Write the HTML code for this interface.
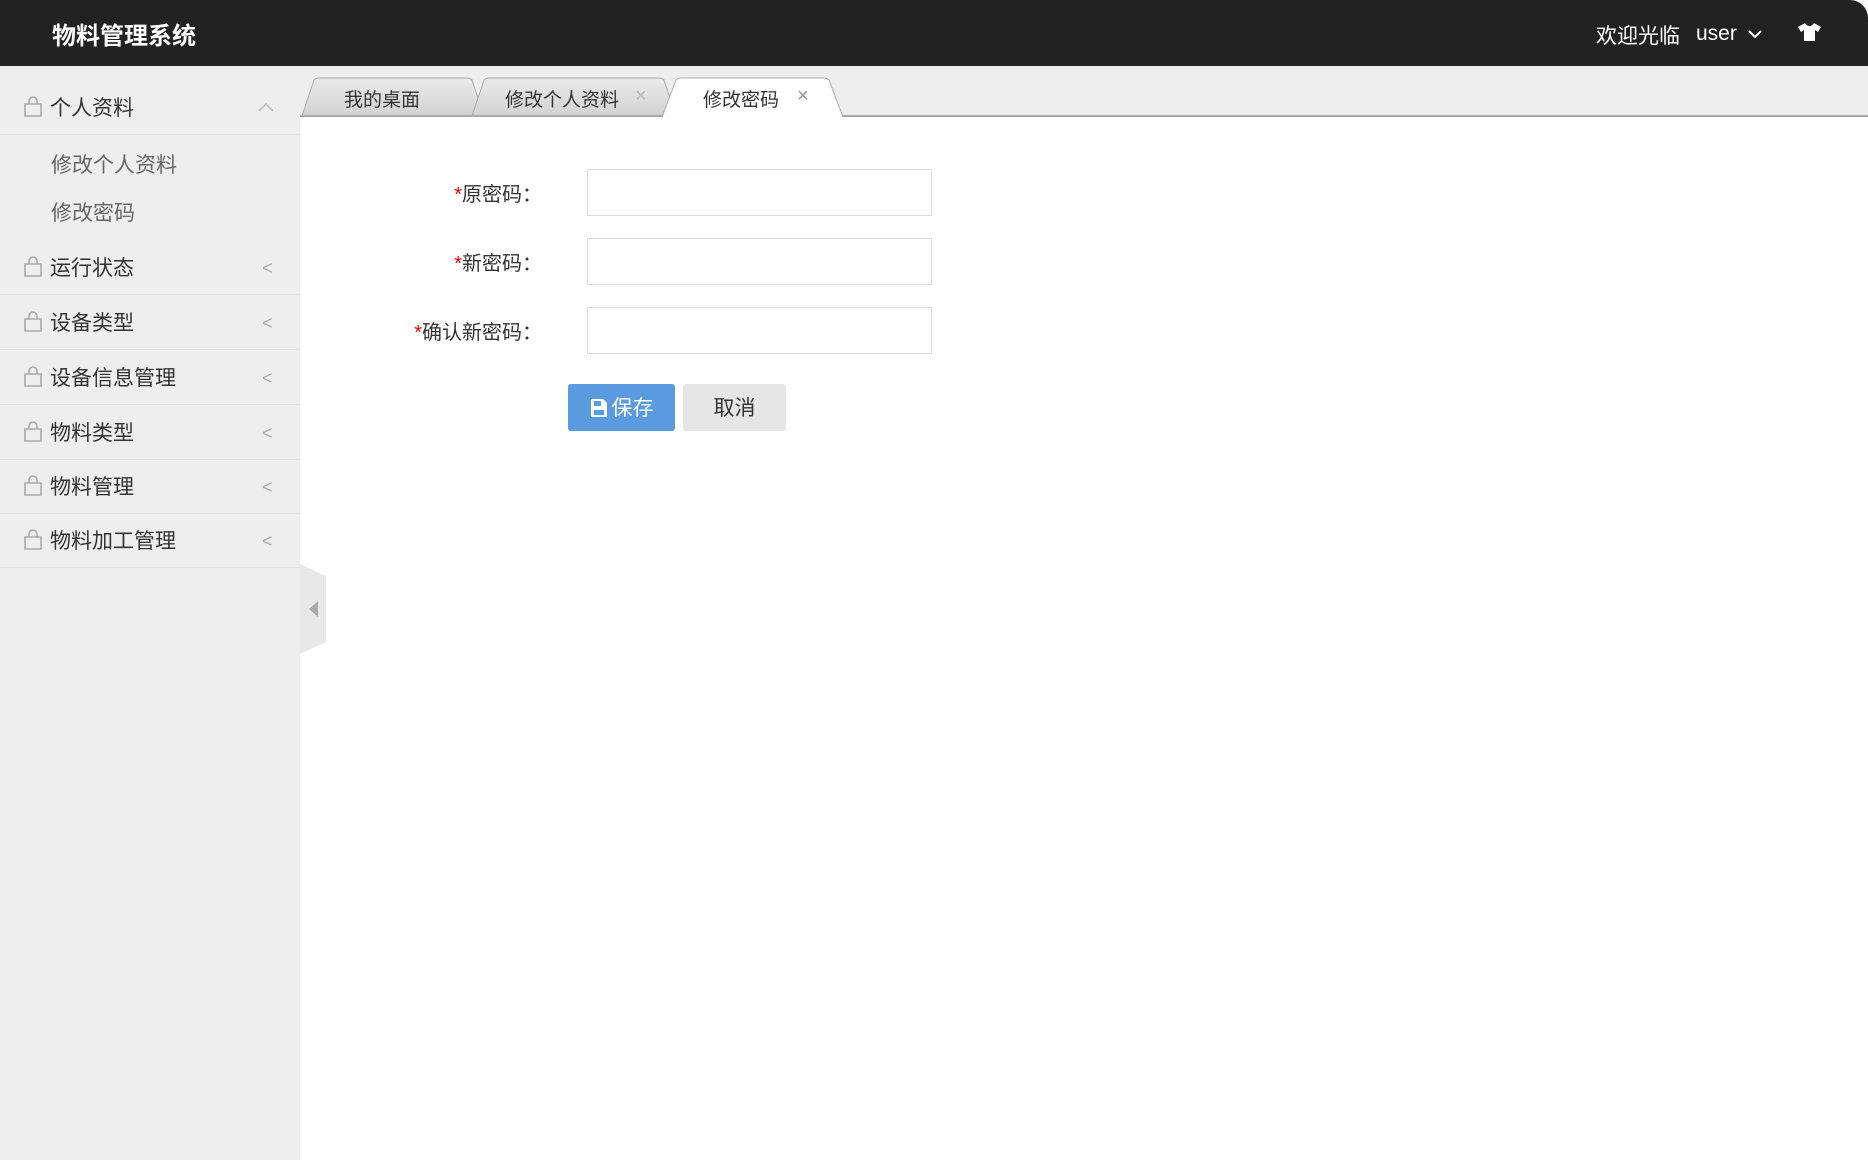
<!DOCTYPE html>
<html><head><meta charset="utf-8"><style>
*{margin:0;padding:0;box-sizing:border-box}
body{width:1868px;height:1160px;overflow:hidden;background:#fff;font-family:"Liberation Sans","Noto Sans CJK SC",sans-serif;position:relative}
.hd{position:absolute;left:0;top:0;width:1868px;height:66px;background:#222;border-top-right-radius:18px}
.title{position:absolute;left:52px;top:16px;color:#fff;font-size:24px;font-weight:bold}
.wel{position:absolute;left:1596px;top:20px;color:#fff;font-size:21px}
.user{position:absolute;left:1696px;top:22px;color:#fff;font-size:21px}
.side{position:absolute;left:0;top:66px;width:300px;height:1094px;background:#eee}
.item{position:absolute;left:0;width:300px;height:55px;border-bottom:1px solid #e2e2e2;font-size:21px;color:#333}
.item .t{position:absolute;left:50px;top:12px}
.item svg.ic{position:absolute;left:23px;top:16px}
.item .ch{position:absolute;left:262px;top:18px;color:#aaa;font-size:18px}
.sub{position:absolute;left:51px;font-size:21px;color:#666}
.tabbar{position:absolute;left:300px;top:66px;width:1568px;height:51px;background:#eee}
.lab{position:absolute;width:300px;left:242px;text-align:right;font-size:20px;color:#333}
.lab b{color:#e00;font-weight:normal}
.inp{position:absolute;left:587px;width:345px;height:47px;border:1px solid #ddd;background:#fff}
.btn{position:absolute;top:384px;height:47px;border-radius:3px;font-size:21px;text-align:center;line-height:49px}
</style></head><body>
<div class="hd">
<div class="title">物料管理系统</div>
<div class="wel">欢迎光临</div>
<div class="user">user <svg width="16" height="12" viewBox="0 0 16 12" style="margin-left:4px"><path d="M2 3l6 6 6-6" stroke="#fff" stroke-width="2" fill="none"/></svg></div>
<svg style="position:absolute;left:1797px;top:22px" width="25" height="20" viewBox="0 0 25 20"><path d="M8 1L1 5l3 5 3-2v11h11V8l3 2 3-5-7-4c-1 2-3 3-4.5 3S9 3 8 1z" fill="#fff"/></svg>
</div>
<div class="side">
<div class="item" style="top:14px;height:55px"><svg class="ic" width="20" height="22" viewBox="0 0 20 22"><path d="M2 8h16v12H2z M6 8V5a4 4 0 0 1 8 0v3" stroke="#aaa" stroke-width="1.6" fill="none"/></svg><span class="t">个人资料</span><svg style="position:absolute;left:258px;top:22px" width="16" height="10" viewBox="0 0 16 10"><path d="M1 9l7-7 7 7" stroke="#bbb" stroke-width="1.5" fill="none"/></svg></div>
<div class="sub" style="top:83px">修改个人资料</div>
<div class="sub" style="top:131px">修改密码</div>
<div class="item" style="top:174px"><svg class="ic" width="20" height="22" viewBox="0 0 20 22"><path d="M2 8h16v12H2z M6 8V5a4 4 0 0 1 8 0v3" stroke="#aaa" stroke-width="1.6" fill="none"/></svg><span class="t">运行状态</span><span class="ch">&lt;</span></div>
<div class="item" style="top:229px"><svg class="ic" width="20" height="22" viewBox="0 0 20 22"><path d="M2 8h16v12H2z M6 8V5a4 4 0 0 1 8 0v3" stroke="#aaa" stroke-width="1.6" fill="none"/></svg><span class="t">设备类型</span><span class="ch">&lt;</span></div>
<div class="item" style="top:284px"><svg class="ic" width="20" height="22" viewBox="0 0 20 22"><path d="M2 8h16v12H2z M6 8V5a4 4 0 0 1 8 0v3" stroke="#aaa" stroke-width="1.6" fill="none"/></svg><span class="t">设备信息管理</span><span class="ch">&lt;</span></div>
<div class="item" style="top:339px"><svg class="ic" width="20" height="22" viewBox="0 0 20 22"><path d="M2 8h16v12H2z M6 8V5a4 4 0 0 1 8 0v3" stroke="#aaa" stroke-width="1.6" fill="none"/></svg><span class="t">物料类型</span><span class="ch">&lt;</span></div>
<div class="item" style="top:393px"><svg class="ic" width="20" height="22" viewBox="0 0 20 22"><path d="M2 8h16v12H2z M6 8V5a4 4 0 0 1 8 0v3" stroke="#aaa" stroke-width="1.6" fill="none"/></svg><span class="t">物料管理</span><span class="ch">&lt;</span></div>
<div class="item" style="top:447px"><svg class="ic" width="20" height="22" viewBox="0 0 20 22"><path d="M2 8h16v12H2z M6 8V5a4 4 0 0 1 8 0v3" stroke="#aaa" stroke-width="1.6" fill="none"/></svg><span class="t">物料加工管理</span><span class="ch">&lt;</span></div>
</div>
<svg style="position:absolute;left:300px;top:564px" width="28" height="90" viewBox="0 0 28 90"><path d="M0 0l26 12v66L0 90z" fill="#e8e8e8"/><path d="M18 37l-9 8 9 8z" fill="#aaa"/></svg>
<div class="tabbar">
<svg width="1568" height="51" viewBox="0 0 1568 51" style="position:absolute;left:0;top:0">
<defs><linearGradient id="g" x1="0" y1="0" x2="0" y2="1"><stop offset="0" stop-color="#eaeaea"/><stop offset="1" stop-color="#d2d2d2"/></linearGradient></defs>
<path d="M2 50L14 14q2-2 5-2h148q3 0 5 2l12 36z" fill="url(#g)" stroke="#aaa"/>
<path d="M172 50L184 14q2-2 5-2h170q3 0 5 2l12 36z" fill="url(#g)" stroke="#aaa"/>
<line x1="0" y1="50" x2="1568" y2="50" stroke="#aaa" stroke-width="2"/>
<path d="M362 51L376 14q2-2 5-2h143q3 0 5 2l14 37z" fill="#fff" stroke="#aaa"/>
<rect x="363" y="49" width="178" height="3" fill="#fff"/>
</svg>
<div style="position:absolute;left:44px;top:19px;font-size:19px;color:#333">我的桌面</div>
<div style="position:absolute;left:205px;top:19px;font-size:19px;color:#333">修改个人资料</div>
<div style="position:absolute;left:335px;top:19px;font-size:20px;color:#bbb">×</div>
<div style="position:absolute;left:403px;top:19px;font-size:19px;color:#333">修改密码</div>
<div style="position:absolute;left:497px;top:19px;font-size:20px;color:#999">×</div>
</div>
<div class="lab" style="top:178px"><b>*</b>原密码：</div>
<div class="lab" style="top:247px"><b>*</b>新密码：</div>
<div class="lab" style="top:316px"><b>*</b>确认新密码：</div>
<div class="inp" style="top:169px"></div>
<div class="inp" style="top:238px"></div>
<div class="inp" style="top:307px"></div>
<div class="btn" style="left:568px;width:107px;background:#5a9be0;color:#fff"><svg width="18" height="20" viewBox="0 0 18 20" style="vertical-align:-3px;margin-right:4px"><path d="M1 1h12l4 4v14H1z" fill="#fff"/><rect x="4" y="3" width="7" height="5" fill="#5a9be0"/><rect x="4" y="12" width="10" height="5" fill="#5a9be0"/></svg>保存</div>
<div class="btn" style="left:683px;width:103px;background:#e6e6e6;color:#333">取消</div>
</body></html>
